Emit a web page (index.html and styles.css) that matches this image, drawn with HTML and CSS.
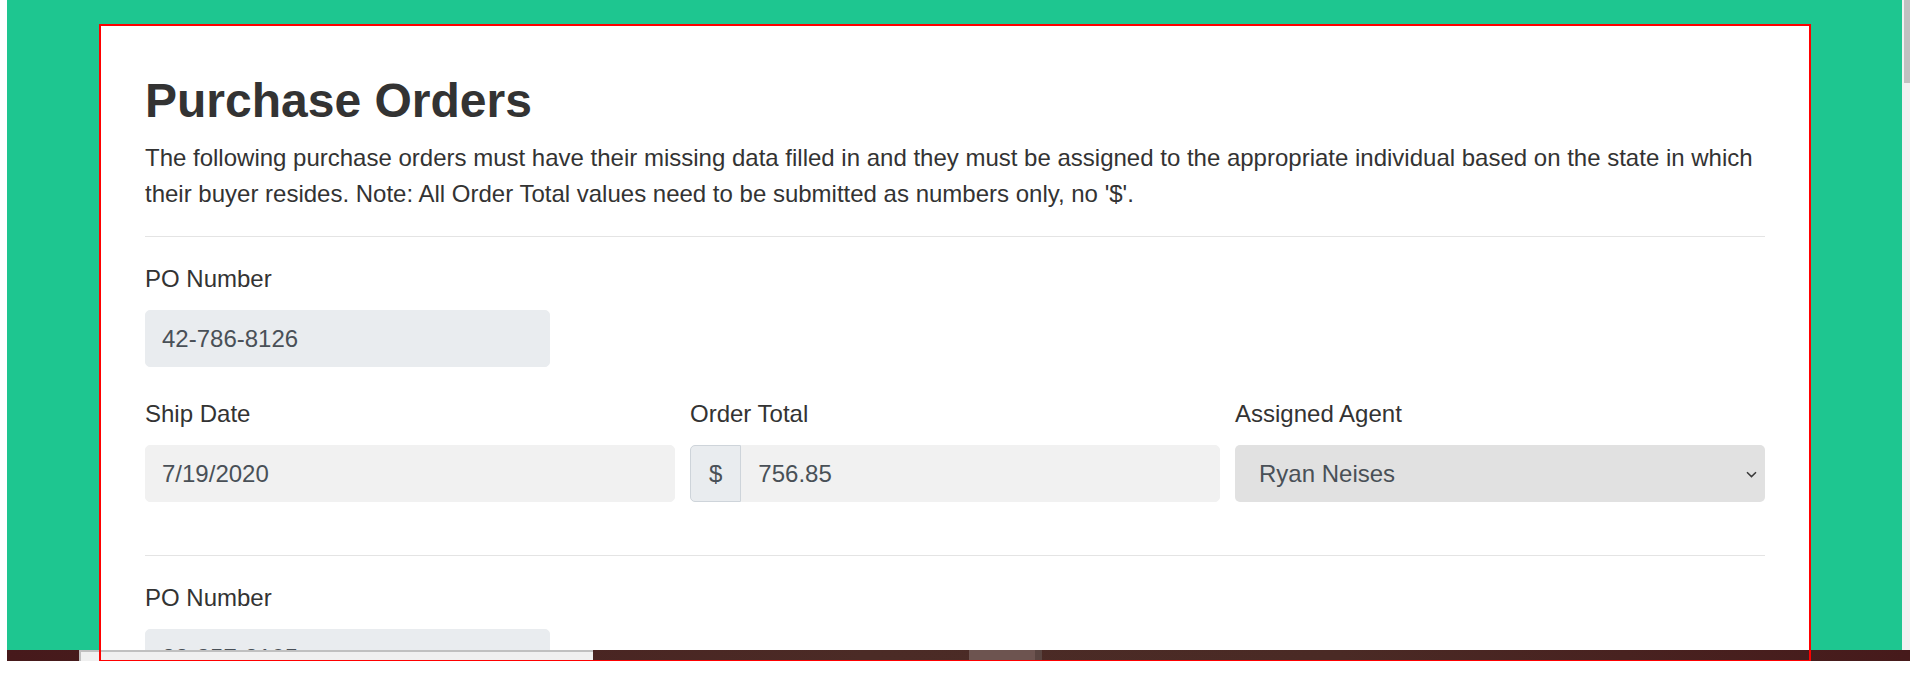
FILE: index.html
```html
<!DOCTYPE html>
<html lang="en">
<head>
<meta charset="utf-8">
<title>Purchase Orders</title>
<link rel="stylesheet" href="styles.css">
</head>
<body>
<div class="screen">
  <div class="edge"></div>
  <div class="stage">
    <main class="panel">
      <h1 class="title">Purchase Orders</h1>
      <p class="lead">The following purchase orders must have their missing data filled in and they must be assigned to the appropriate individual based on the state in which their buyer resides. Note: All Order Total values need to be submitted as numbers only, no '$'.</p>

      <section class="po">
        <div class="field po-num">
          <label class="label">PO Number</label>
          <input class="input ro" type="text" value="42-786-8126" readonly>
        </div>
        <div class="row3">
          <div class="field">
            <label class="label">Ship Date</label>
            <input class="input" type="text" value="7/19/2020">
          </div>
          <div class="field">
            <label class="label">Order Total</label>
            <div class="group">
              <span class="addon">$</span>
              <input class="input grouped" type="text" value="756.85">
            </div>
          </div>
          <div class="field">
            <label class="label">Assigned Agent</label>
            <div class="select">
              <span class="select-text">Ryan Neises</span>
              <svg class="chev" width="11" height="7" viewBox="0 0 11 7"><path d="M1 1.2 L5.5 5.6 L10 1.2" fill="none" stroke="#3a3a3a" stroke-width="1.5"/></svg>
            </div>
          </div>
        </div>
      </section>

      <section class="po">
        <div class="field po-num">
          <label class="label">PO Number</label>
          <input class="input ro" type="text" value="88-357-8105" readonly>
        </div>
      </section>
    </main>
  </div>
  <div class="vscroll"><div class="vthumb"></div></div>
  <div class="hbar">
    <div class="hbar-light"></div>
    <div class="hbar-thumb"></div>
    <div class="hbar-grip"></div>
  </div>
  <div class="outline"></div>
</div>
</body>
</html>
```

FILE: styles.css
```css
html, body {
  margin: 0;
  padding: 0;
  background: #ffffff;
}

body {
  font-family: "Liberation Sans", Arial, sans-serif;
  color: #333333;
}

.screen {
  position: relative;
  display: flex;
  height: 661px;
  overflow: hidden;
}

.edge {
  width: 7px;
  flex: 0 0 7px;
  background: #ffffff;
}

.stage {
  flex: 1;
  background: #1ec690;
  padding: 26px 93px 0 94px;
}

.panel {
  background: #ffffff;
  padding: 46px 44px 200px;
}

.title {
  margin: 0 0 10px;
  font-size: 48px;
  line-height: 58px;
  font-weight: 700;
  color: #333333;
}

.lead {
  margin: 0 0 24px;
  font-size: 24px;
  line-height: 36px;
  color: #333333;
}

.po {
  border-top: 1px solid #e4e4e4;
  padding: 24px 0 53px;
}

.field {
  display: flex;
  flex-direction: column;
}

.po-num {
  width: 405px;
}

.label {
  font-size: 24px;
  line-height: 36px;
  margin-bottom: 13px;
  color: #333333;
}

.row3 {
  margin-top: 29px;
  display: grid;
  grid-template-columns: 1fr 1fr 1fr;
  column-gap: 15px;
}

.input {
  box-sizing: border-box;
  width: 100%;
  height: 57px;
  margin: 0;
  padding: 0 16px;
  font-family: "Liberation Sans", Arial, sans-serif;
  font-size: 24px;
  color: #495057;
  background: #f1f1f1;
  border: 1px solid #f1f1f1;
  border-radius: 5px;
  outline: none;
}

.input.ro {
  background: #e9ecef;
  border-color: #e9ecef;
}

.group {
  display: flex;
}

.addon {
  box-sizing: border-box;
  height: 57px;
  padding: 0 18px;
  display: flex;
  align-items: center;
  font-size: 24px;
  color: #495057;
  background: #e9ecef;
  border: 1px solid #ced4da;
  border-radius: 5px 0 0 5px;
}

.input.grouped {
  flex: 1;
  border-radius: 0 5px 5px 0;
}

.select {
  box-sizing: border-box;
  height: 57px;
  display: flex;
  align-items: center;
  justify-content: space-between;
  padding: 0 8px 0 24px;
  background: #e1e1e1;
  border-radius: 5px;
  font-size: 24px;
  color: #495057;
}

.chev {
  display: block;
  margin-top: 2px;
}

.vscroll {
  width: 8px;
  flex: 0 0 8px;
  background: #f1f1f1;
  display: flex;
  justify-content: flex-end;
}

.vthumb {
  width: 6px;
  height: 83px;
  background: #c1c1c1;
}

.hbar {
  position: absolute;
  left: 7px;
  right: 0;
  bottom: 0;
  height: 11px;
  background: linear-gradient(90deg, #46191b 0%, #4b2b26 45%, #4a2a25 70%, #461a1b 100%);
  z-index: 2;
}

.hbar-light {
  position: absolute;
  left: 72px;
  top: 0;
  width: 512px;
  height: 9px;
  background: #f0f0f0;
  border-top: 2px solid #c0c0c0;
  border-left: 2px solid #c0c0c0;
}

.hbar-thumb {
  position: absolute;
  left: 962px;
  top: 0;
  width: 66px;
  height: 11px;
  background: #6d5450;
}

.hbar-grip {
  position: absolute;
  left: 1028px;
  top: 0;
  width: 7px;
  height: 11px;
  background: #594440;
}

.outline {
  position: absolute;
  left: 99px;
  top: 24px;
  width: 1712px;
  height: 637px;
  box-sizing: border-box;
  border: 2px solid #ff0000;
  border-bottom-width: 1px;
  z-index: 3;
  pointer-events: none;
}
```
